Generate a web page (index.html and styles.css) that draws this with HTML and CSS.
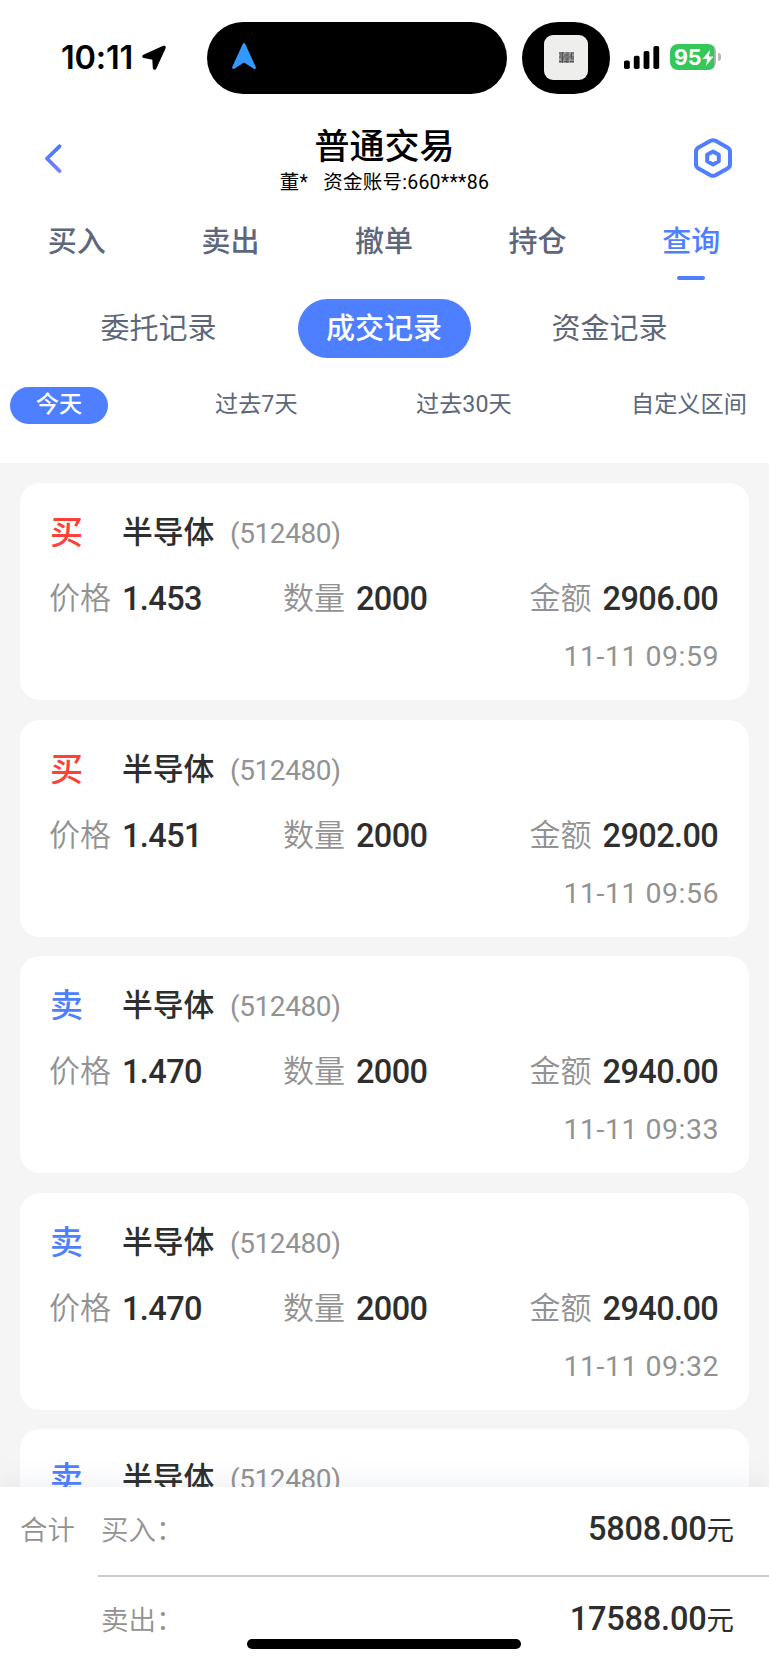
FILE: index.html
```html
<!DOCTYPE html>
<html lang="zh-CN">
<head>
<meta charset="utf-8">
<title>普通交易</title>
<link rel="stylesheet" href="styles.css">
</head>
<body>
<div class="app">
  <header class="status">
    <span class="clock">10:11</span>
    <svg class="loc" viewBox="0 0 26 26"><path d="M23 2.500 L3 11.300 L12 13 Q13 13.300 13.100 14.500 L13.600 23 Z" fill="#000" stroke="#000" stroke-width="3.600" stroke-linejoin="round"/></svg>
    <div class="island">
      <svg class="nav-arrow" viewBox="0 0 26 28"><path d="M13 2.500 L23.500 25.500 L13 18.700 L2.500 25.500Z" fill="#3398ff" stroke="#3398ff" stroke-width="2.8" stroke-linejoin="round"/></svg>
    </div>
    <div class="bubble"><div class="tile">
      <svg class="code-icon" viewBox="0 0 15 11"><rect width="15" height="11" fill="#999"/><path d="M0 1h5M7 1h3M12 1h3M1 3h3M5 3h5M11 3h2M0 5h7M9 5h6M2 7h3M6 7h4M12 7h3M0 9.500h3M5 9.500h5M11 9.500h4M3.500 0v11M8 2v9M12.500 1v6" stroke="#555" stroke-width="1"/></svg>
    </div></div>
    <svg class="signal" viewBox="0 0 36 24"><rect x="0" y="14.500" width="5.800" height="8.500" rx="1.800"/><rect x="9.800" y="9.800" width="5.800" height="13.200" rx="1.800"/><rect x="19.600" y="5" width="5.800" height="18" rx="1.800"/><rect x="29.400" y="0" width="5.800" height="23" rx="1.800"/></svg>
    <div class="battery"><span>95</span>
      <svg class="bolt" viewBox="0 0 12 16"><path d="M8 0 L.5 9 H5.200 L4 16 L11.500 6.500 H6.800Z" fill="#fff"/></svg>
    </div>
    <i class="nub"></i>
  </header>

  <div class="titlebar">
    <svg class="back" viewBox="0 0 18 30"><defs><linearGradient id="g" x1="0" y1="0" x2="0" y2="1"><stop offset="0" stop-color="#4679ff"/><stop offset="1" stop-color="#7380ff"/></linearGradient></defs><path d="M15.500 2.300 L3 14.500 L15.500 27" fill="none" stroke="url(#g)" stroke-width="3.800" stroke-linecap="round" stroke-linejoin="round"/></svg>
    <div class="heading">
      <h1>普通交易</h1>
      <p><span>董*</span><span>资金账号:660***86</span></p>
    </div>
    <svg class="gear" viewBox="0 0 38 40" fill="none" stroke="#4d7fff" stroke-width="4" stroke-linejoin="round"><path d="M16.500 2.800 Q19 1.500 21.500 2.800 L33.500 9.500 Q36 11 36 13.500 V26.500 Q36 29 33.500 30.500 L21.500 37.200 Q19 38.500 16.500 37.200 L4.500 30.500 Q2 29 2 26.500 V13.500 Q2 11 4.500 9.500Z"/><path d="M19 13.400 L24.800 16.700 V23.300 L19 26.600 L13.200 23.300 V16.700Z"/></svg>
  </div>

  <nav class="tabs"><a>买入</a><a>卖出</a><a>撤单</a><a>持仓</a><a class="active">查询</a></nav>
  <nav class="subtabs"><a>委托记录</a><a class="active">成交记录</a><a>资金记录</a></nav>
  <nav class="ranges"><a class="active">今天</a><a>过去7天</a><a>过去30天</a><a>自定义区间</a></nav>

  <main class="list">
    <article class="card">
      <div class="name"><b class="buy">买</b><strong>半导体</strong><em>(512480)</em></div>
      <div class="facts"><div><label>价格</label><b>1.453</b></div><div><label>数量</label><b>2000</b></div><div><label>金额</label><b>2906.00</b></div></div>
      <time>11-11 09:59</time>
    </article>
    <article class="card">
      <div class="name"><b class="buy">买</b><strong>半导体</strong><em>(512480)</em></div>
      <div class="facts"><div><label>价格</label><b>1.451</b></div><div><label>数量</label><b>2000</b></div><div><label>金额</label><b>2902.00</b></div></div>
      <time>11-11 09:56</time>
    </article>
    <article class="card">
      <div class="name"><b class="sell">卖</b><strong>半导体</strong><em>(512480)</em></div>
      <div class="facts"><div><label>价格</label><b>1.470</b></div><div><label>数量</label><b>2000</b></div><div><label>金额</label><b>2940.00</b></div></div>
      <time>11-11 09:33</time>
    </article>
    <article class="card">
      <div class="name"><b class="sell">卖</b><strong>半导体</strong><em>(512480)</em></div>
      <div class="facts"><div><label>价格</label><b>1.470</b></div><div><label>数量</label><b>2000</b></div><div><label>金额</label><b>2940.00</b></div></div>
      <time>11-11 09:32</time>
    </article>
    <article class="card">
      <div class="name"><b class="sell">卖</b><strong>半导体</strong><em>(512480)</em></div>
    </article>
  </main>

  <footer class="totals">
    <span class="sum">合计</span>
    <div class="rows">
      <div class="row"><label>买入：</label><p><b>5808.00</b>元</p></div>
      <div class="row"><label>卖出：</label><p><b>17588.00</b>元</p></div>
    </div>
    <i class="home"></i>
  </footer>
</div>
</body>
</html>
```
FILE: styles.css
```css
* { box-sizing: border-box; margin: 0; padding: 0; }
body { background: #fff; font-family: Roboto, "Noto Sans CJK SC", sans-serif; color: #2e2e2e; overflow: hidden; }
em, i { font-style: normal; }
svg { display: block; flex: none; }
.app { width: 769px; height: 1665px; display: flex; flex-direction: column; overflow: hidden; }

.status { height: 116px; flex: none; padding-top: 22px; display: flex; align-items: flex-start; }
.clock { width: 80px; margin-left: 61px; line-height: 72px; font-family: Inter, sans-serif; font-size: 32.500px; font-weight: 600; color: #000; letter-spacing: -0.2px; white-space: nowrap; flex: none; }
.loc { width: 26px; height: 26px; margin-top: 23px; }
.island { width: 300px; height: 72px; margin-left: 40px; border-radius: 36px; background: #000; padding: 20px 0 0 24px; flex: none; }
.nav-arrow { width: 26px; height: 28px; }
.bubble { width: 88px; height: 72px; margin-left: 15px; border-radius: 36px; background: #000; padding: 13px 22px; flex: none; }
.tile { width: 44px; height: 45px; border-radius: 9px; background: #eeeeec; display: flex; align-items: center; justify-content: center; }
.code-icon { width: 15px; height: 11px; }
.signal { width: 36px; height: 24px; margin: 24px 0 0 14px; }
.battery { width: 46px; height: 26px; margin: 22px 0 0 10px; border-radius: 8px; background: linear-gradient(90deg, #34c759 44px, #b0b0b0 44px); display: flex; align-items: center; padding-left: 4px; flex: none; }
.battery span { font: 700 21.500px/27px Inter, sans-serif; color: #fff; width: 28px; letter-spacing: -0.3px; }
.bolt { width: 12px; height: 16px; margin-top: 1px; }
.nub { width: 3px; height: 8px; margin: 31px 0 0 2px; border-radius: 0 3px 3px 0; background: #b8b8b8; }

.titlebar { height: 84px; flex: none; display: flex; align-items: flex-start; color: #000; }
.back { width: 18px; height: 30px; margin: 28px 0 0 44px; }
.heading { width: 645px; text-align: center; }
.heading h1 { margin-top: 6px; height: 51px; line-height: 52px; font-size: 35px; font-weight: 500; }
.heading p { display: flex; justify-content: center; gap: 15px; height: 20px; line-height: 20px; font-size: 19.500px; letter-spacing: 0.25px; }
.gear { width: 38px; height: 40px; margin: 22px 0 0 -13px; }

.tabs { height: 86px; flex: none; display: grid; grid-template-columns: repeat(5, 1fr); text-align: center; font-size: 29px; line-height: 84px; font-weight: 500; color: #5d677c; padding-right: 1px; }
.tabs .active { color: #4d7fff; display: flex; flex-direction: column; align-items: center; }
.tabs .active::after { content: ""; width: 28px; height: 4px; border-radius: 2px; background: #4d7fff; margin-top: -8.500px; }

.subtabs { height: 86px; flex: none; display: flex; justify-content: center; padding: 13px 1px 0 0; gap: 81px; font-size: 29px; line-height: 60px; color: #5d677c; }
.subtabs .active { width: 173px; height: 59px; border-radius: 30px; background: #4d7fff; color: #fff; text-align: center; font-weight: 500; }

.ranges { height: 91px; flex: none; display: grid; grid-template-columns: 205px 201px 215px 1fr; padding: 15px 0 0 10px; font-size: 23.200px; line-height: 35px; color: #5d677c; }
.ranges .active { width: 98px; height: 37px; border-radius: 19px; background: #4d7fff; color: #fff; text-align: center; font-weight: 500; }

.list { height: 1024px; flex: none; background: #f5f5f5; padding: 20px 20px 0; display: flex; flex-direction: column; gap: 19.500px; overflow: hidden; }
.card { height: 217px; flex: none; border-radius: 20px; background: #fff; padding: 19px 30px 0 29px; }
.name { height: 62px; display: flex; line-height: 62px; }
.name b { width: 73px; font-size: 33px; font-weight: 500; padding-left: 1px; line-height: 61px; }
.buy { color: #ff4039; }
.sell { color: #4d7fff; }
.name strong { width: 108px; font-size: 30.800px; font-weight: 500; }
.name em { font-size: 28px; color: #929292; letter-spacing: -0.4px; line-height: 64px; }
.facts { height: 66px; display: grid; grid-template-columns: 234px 1fr auto; line-height: 70px; }
.facts div { display: flex; gap: 11px; }
.facts div:last-child { margin-right: 0.8px; }
.facts label { font-size: 31px; color: #929292; font-weight: 350; }
.facts b { font-size: 32.500px; font-weight: 500; letter-spacing: -0.6px; }
.card time { display: block; text-align: right; font-size: 28.500px; line-height: 54px; color: #929292; letter-spacing: 0.5px; }

.totals { position: relative; height: 178px; flex: none; display: flex; background: #fff; box-shadow: 0 0 28px rgba(90, 100, 140, 0.13); line-height: 88px; font-size: 27.500px; }
.sum { width: 98px; padding-left: 20px; color: #929292; font-weight: 350; }
.rows { flex: 1; }
.row { height: 90px; display: flex; justify-content: space-between; padding: 0 35px 0 3px; }
.row:first-child { border-bottom: 2px solid #ccc; }
.row label { color: #929292; font-weight: 350; }
.row p { display: flex; }
.row b { font-size: 32.500px; font-weight: 500; line-height: 85px; letter-spacing: -0.2px; }
.home { position: absolute; left: 247px; top: 152px; width: 274px; height: 10px; border-radius: 5px; background: #000; }
```
